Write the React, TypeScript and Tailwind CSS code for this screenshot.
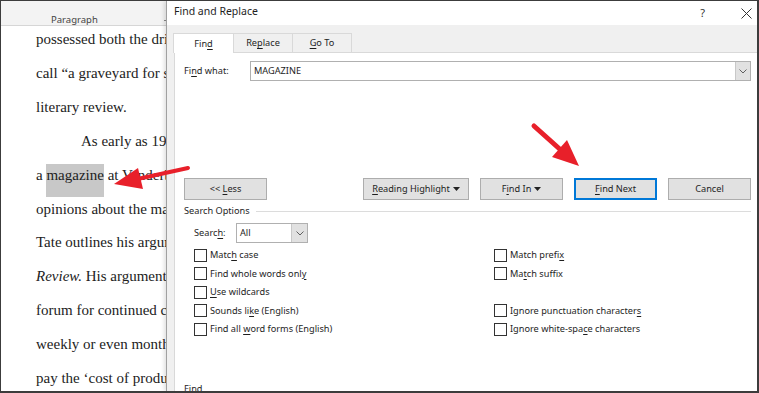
import { ReactNode } from 'react';

// text with one underlined access key, marked by "&"
function Mn({ t }: { t: string }) {
  const i = t.indexOf('&');
  if (i < 0) return <span>{t}</span>;
  return (
    <span>
      {t.slice(0, i)}
      <span className="underline underline-offset-[2px]">{t[i + 1]}</span>
      {t.slice(i + 2)}
    </span>
  );
}

function Chevron() {
  return (
    <svg width="8" height="5" viewBox="0 0 8 5">
      <path d="M0.5 0.5 L4 4 L7.5 0.5" fill="none" stroke="#606060" strokeWidth="1" />
    </svg>
  );
}

function Caret() {
  return (
    <svg width="7" height="4" viewBox="0 0 7 4" className="ml-[3px]">
      <path d="M0 0 H7 L3.5 4 Z" fill="#222" />
    </svg>
  );
}

function Btn({ children, w, primary }: { children: ReactNode; w: string; primary?: boolean }) {
  return (
    <div
      className={`${w} h-[22px] flex items-center justify-center bg-[#e1e1e1] ${
        primary ? 'border-2 border-[#0078d7]' : 'border border-[#adadad]'
      }`}
    >
      {children}
    </div>
  );
}

function Check({ label }: { label?: string }) {
  if (!label) return <div className="h-[18.5px]" />;
  return (
    <div className="h-[18.5px] flex items-center gap-[3px]">
      <span className="w-[13px] h-[13px] border border-[#333] bg-white shrink-0" />
      <Mn t={label} />
    </div>
  );
}

const LINES: { text: ReactNode; indent?: boolean }[] = [
  { text: 'possessed both the drive and the ambition to found what Ransom would' },
  { text: 'call “a graveyard for spent and worthy reputations,” a national' },
  { text: 'literary review.' },
  { text: 'As early as 1927, Tate had proposed starting', indent: true },
  {
    text: (
      <>
        a <span className="bg-[#c8c8c8] pt-[3px] pb-[14px]">magazine</span> at Vanderbilt to publish their
      </>
    ),
  },
  { text: 'opinions about the magazine and the state of letters' },
  { text: 'Tate outlines his argument in a letter to the' },
  {
    text: (
      <>
        <i>Review.</i> His argument was that the South needed a
      </>
    ),
  },
  { text: 'forum for continued criticism, not a quarterly but a' },
  { text: 'weekly or even monthly journal that could' },
  { text: 'pay the ‘cost of production’ of its contributors' },
];

export default function App() {
  return (
    <div className="relative w-[759px] h-[393px] overflow-hidden bg-white border-t border-l border-r-2 border-b-2 border-[#3c3c3c]">
      {/* word ribbon */}
      <div className="h-[25px] bg-[#f3f3f3] border-b border-[#d6d6d6] flex items-end font-['Noto_Sans',sans-serif] text-[9.5px] text-[#444]">
        <span className="ml-[50px] mb-[-2px]">Paragraph</span>
        <span className="ml-[66px] mb-[4px] w-[4px] h-[6px] border-r border-b border-[#888]" />
      </div>

      {/* document */}
      <div className="pl-[35px] -mt-[3px] font-['Liberation_Serif',serif] text-[15px] leading-[33.9px] text-[#222]">
        {LINES.map((l, i) => (
          <div key={i} className={`whitespace-nowrap ${l.indent ? 'pl-[45px]' : ''}`}>
            {l.text}
          </div>
        ))}
      </div>

      {/* dialog window */}
      <div className="absolute left-[165px] top-0 w-[591px] h-[390px] bg-[#f0f0f0] border-l border-[#a0a0a0] flex flex-col overflow-hidden font-['Noto_Sans',sans-serif] text-[9.2px] text-[#1e1e1e] shadow-[-2px_0_4px_rgba(0,0,0,0.12)]">
        <div className="h-[24px] shrink-0 bg-white flex items-center pl-[7px] pr-[5px] text-[10.5px]">
          <span className="-mt-[2px]">Find and Replace</span>
          <span className="ml-auto mr-[36px] text-[11px] text-[#333]">?</span>
          <svg width="11" height="11" viewBox="0 0 11 11">
            <path d="M0.5 0.5 L10.5 10.5 M10.5 0.5 L0.5 10.5" stroke="#333" strokeWidth="1" />
          </svg>
        </div>

        <div className="h-[27px] shrink-0 flex items-end pl-[6px]">
          <div className="w-[61px] h-[20px] bg-white border border-b-0 border-[#d9d9d9] flex items-center justify-center -mb-px relative z-10">
            <Mn t="Fin&d" />
          </div>
          <div className="w-[59px] h-[19px] bg-[#f0f0f0] border border-l-0 border-b-0 border-[#d9d9d9] flex items-center justify-center">
            <Mn t="Re&place" />
          </div>
          <div className="w-[59px] h-[19px] bg-[#f0f0f0] border border-l-0 border-b-0 border-[#d9d9d9] flex items-center justify-center">
            <Mn t="&Go To" />
          </div>
        </div>

        <div className="flex-1 min-h-0 overflow-hidden ml-[7px] bg-white border-t border-l border-[#d9d9d9] pl-[9px] pr-[6px]">
          <div className="mt-[8px] flex items-center h-[20px]">
            <span className="w-[66px]">
              <Mn t="Fi&nd what:" />
            </span>
            <div className="flex-1 h-[20px] border border-[#b0b0b0] flex items-center">
              <span className="pl-[3px] flex-1">MAGAZINE</span>
              <div className="w-[15px] h-[18px] bg-[#e1e1e1] border-l border-[#c8c8c8] flex items-center justify-center">
                <Chevron />
              </div>
            </div>
          </div>

          <div className="mt-[97px] flex items-center gap-[11px]">
            <Btn w="w-[83px]">
              <Mn t="<< &Less" />
            </Btn>
            <div className="ml-auto" />
            <Btn w="w-[106px]">
              <Mn t="&Reading Highlight" />
              <Caret />
            </Btn>
            <Btn w="w-[83px]">
              <Mn t="F&ind In" />
              <Caret />
            </Btn>
            <Btn w="w-[83px]" primary>
              <Mn t="&Find Next" />
            </Btn>
            <Btn w="w-[83px]">Cancel</Btn>
          </div>

          <div className="mt-[4px] h-[14px] flex items-center gap-[6px]">
            <span>Search Options</span>
            <span className="flex-1 h-px bg-[#dcdcdc]" />
          </div>

          <div className="mt-[5px] pl-[10px] flex items-center h-[20px]">
            <span className="w-[42px]">
              <Mn t="Searc&h:" />
            </span>
            <div className="w-[72px] h-[20px] border border-[#b0b0b0] flex items-center">
              <span className="pl-[3px] flex-1">All</span>
              <div className="w-[16px] h-[18px] bg-[#e1e1e1] border-l border-[#c8c8c8] flex items-center justify-center">
                <Chevron />
              </div>
            </div>
          </div>

          <div className="mt-[2.75px] pl-[10px] grid grid-cols-[300px_1fr]">
            <div>
              <Check label="Matc&h case" />
              <Check label="Find whole words onl&y" />
              <Check label="&Use wildcards" />
              <Check label="Sounds li&ke (English)" />
              <Check label="Find all &word forms (English)" />
            </div>
            <div>
              <Check label="Match prefi&x" />
              <Check label="Ma&tch suffix" />
              <Check />
              <Check label="Ignore punctuation character&s" />
              <Check label="Ignore white-spa&ce characters" />
            </div>
          </div>

          <div className="mt-[44px] leading-[13px]">Find</div>
        </div>
      </div>

      {/* annotation arrows */}
      <svg className="absolute left-0 top-0 pointer-events-none" width="759" height="393">
        <line x1="187" y1="167" x2="132" y2="179" stroke="#e8202a" strokeWidth="4" strokeLinecap="round" />
        <polygon points="113,183 137,167 142,188" fill="#e8202a" />
        <line x1="533" y1="125" x2="562" y2="151" stroke="#e8202a" strokeWidth="5" strokeLinecap="round" />
        <polygon points="578,165 566,139 551,156" fill="#e8202a" />
      </svg>
    </div>
  );
}
